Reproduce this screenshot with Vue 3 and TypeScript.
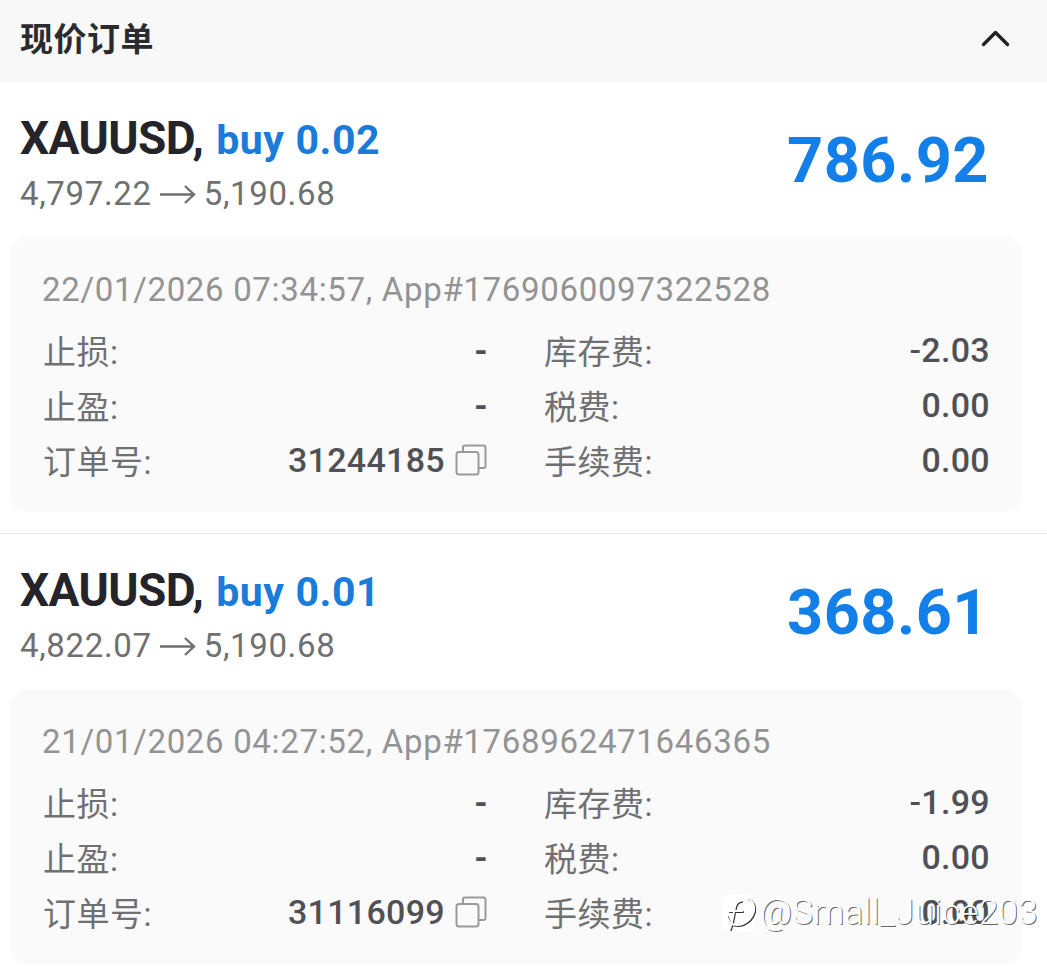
<script setup lang="ts">
interface Order {
  symbol: string
  side: string
  from: string
  to: string
  profit: string
  meta: string
  swap: string
  ticket: string
}

const orders: Order[] = [
  {
    symbol: 'XAUUSD,',
    side: 'buy 0.02',
    from: '4,797.22',
    to: '5,190.68',
    profit: '786.92',
    meta: '22/01/2026 07:34:57, App#1769060097322528',
    swap: '-2.03',
    ticket: '31244185',
  },
  {
    symbol: 'XAUUSD,',
    side: 'buy 0.01',
    from: '4,822.07',
    to: '5,190.68',
    profit: '368.61',
    meta: '21/01/2026 04:27:52, App#1768962471646365',
    swap: '-1.99',
    ticket: '31116099',
  },
]
</script>

<template>
  <div class="page">
    <header class="section-head">
      <span class="section-title">现价订单</span>
      <svg class="chevron" width="30" height="18" viewBox="0 0 30 18" fill="none">
        <path d="M2.500 15.500 14.500 3.500l12 12" stroke="#222" stroke-width="3.400" stroke-linecap="round" stroke-linejoin="round" />
      </svg>
    </header>

    <section v-for="order in orders" :key="order.ticket" class="order">
      <div class="summary">
        <div>
          <div class="title-line">
            <span class="symbol">{{ order.symbol }}</span>
            <span class="side">{{ order.side }}</span>
          </div>
          <div class="prices">
            <span>{{ order.from }}</span>
            <svg class="arrow" width="38" height="22" viewBox="0 0 38 22" fill="none">
              <path d="M1 11.500h34M26 3l9 8.500-9 8.500" stroke="#6f6f6f" stroke-width="2.400" />
            </svg>
            <span>{{ order.to }}</span>
          </div>
        </div>
        <div class="profit">{{ order.profit }}</div>
      </div>

      <div class="card">
        <div class="meta">{{ order.meta }}</div>
        <div class="grid">
          <span class="label">止损:</span>
          <span class="value dash">-</span>
          <span class="label">库存费:</span>
          <span class="value">{{ order.swap }}</span>

          <span class="label">止盈:</span>
          <span class="value dash">-</span>
          <span class="label">税费:</span>
          <span class="value">0.00</span>

          <span class="label">订单号:</span>
          <span class="value ticket">
            {{ order.ticket }}
            <svg class="copy" width="32" height="32" viewBox="0 0 32 32" fill="none">
              <rect x="1.500" y="8" width="22" height="22.500" rx="2.500" stroke="#9a9a9a" stroke-width="2" />
              <path d="M8 7.500V3.500A2 2 0 0 1 10 1.500h18.500a2 2 0 0 1 2 2V22a2 2 0 0 1-2 2H24" stroke="#9a9a9a" stroke-width="2" />
            </svg>
          </span>
          <span class="label">手续费:</span>
          <span class="value">0.00</span>
        </div>
      </div>
    </section>

    <div class="watermark">
      <span class="wm-logo">
        <svg width="34" height="38" viewBox="0 0 34 38" fill="none">
          <path d="M5 22c1 6 5 9 10 9 8 0 15-6 17-14 1-6-2-11-6-13M19 7c-3 0-5 2-6 6l-3 15-2 7M7 17h13" stroke="#333" stroke-width="2" stroke-linecap="round" transform="translate(1 1)" />
          <path d="M5 22c1 6 5 9 10 9 8 0 15-6 17-14 1-6-2-11-6-13M19 7c-3 0-5 2-6 6l-3 15-2 7M7 17h13" stroke="#fff" stroke-width="2" stroke-linecap="round" />
        </svg>
      </span>
      <span>@Small_Juice203</span>
    </div>
  </div>
</template>

<style scoped>
.page {
  position: relative;
  width: 1047px;
  height: 971px;
  overflow: hidden;
  background: #fff;
  font-family: Roboto, "Noto Sans CJK SC", sans-serif;
}

.section-head {
  height: 82px;
  padding: 0 36px 8px 20px;
  box-sizing: border-box;
  display: flex;
  align-items: center;
  justify-content: space-between;
  background: #f8f8f8;
}

.chevron {
  margin-top: 2px;
}

.section-title {
  font-size: 33px;
  font-weight: 700;
  letter-spacing: 0.500px;
  color: #2b2b2f;
}

.order {
  height: 452px;
  box-sizing: border-box;
  padding: 0 25px 0 10px;
  border-bottom: 1px solid #e8e8e8;
}

.order:last-of-type {
  border-bottom: none;
}

.summary {
  height: 155px;
  padding: 30px 33px 0 10px;
  box-sizing: border-box;
  display: flex;
  justify-content: space-between;
}

.title-line {
  display: flex;
  align-items: baseline;
  gap: 13px;
  line-height: 52px;
}

.symbol {
  font-size: 46px;
  font-weight: 700;
  letter-spacing: -0.600px;
  color: #24242a;
}

.side {
  font-size: 41px;
  font-weight: 700;
  letter-spacing: 0.600px;
  color: #1a7bd8;
}

.prices {
  display: flex;
  align-items: center;
  gap: 7px;
  margin-top: 8px;
  font-size: 33px;
  line-height: 40px;
  letter-spacing: 0.650px;
  color: #707070;
}

.profit {
  margin-top: 14px;
  font-size: 63px;
  font-weight: 700;
  line-height: 70px;
  letter-spacing: 0.500px;
  color: #137fe8;
}

.card {
  height: 275px;
  padding: 31px 34px 0 33px;
  box-sizing: border-box;
  border-radius: 18px;
  background: #fafafb;
}

.meta {
  margin-left: -1px;
  font-size: 33px;
  line-height: 44px;
  letter-spacing: 0.670px;
  color: #939393;
}

.grid {
  margin: 10px -2px 0 0;
  display: grid;
  grid-template-columns: 160px 285px 220px 1fr;
  grid-auto-rows: 55px;
  align-items: center;
}

.label {
  font-size: 33px;
  letter-spacing: 0.500px;
  color: #707072;
  white-space: nowrap;
}

.label:nth-child(4n + 3) {
  padding-left: 56px;
}

.value {
  text-align: right;
  font-size: 34px;
  font-weight: 500;
  letter-spacing: 0.300px;
  color: #505055;
}

.dash {
  font-weight: 700;
}

.ticket {
  display: flex;
  align-items: center;
  justify-content: flex-end;
  gap: 10px;
  margin-right: 1px;
}

.watermark {
  position: absolute;
  left: 722px;
  top: 892px;
  display: flex;
  align-items: center;
  gap: 4px;
  font-size: 35px;
  font-weight: 300;
  letter-spacing: 0.250px;
  color: #fff;
  text-shadow: 1px 1px 0 rgba(0, 0, 0, 0.6);
}

.wm-logo {
  display: flex;
  background: #fff;
  border-radius: 10px;
}
</style>

<style>
html,
body {
  margin: 0;
  background: #fff;
}
</style>
